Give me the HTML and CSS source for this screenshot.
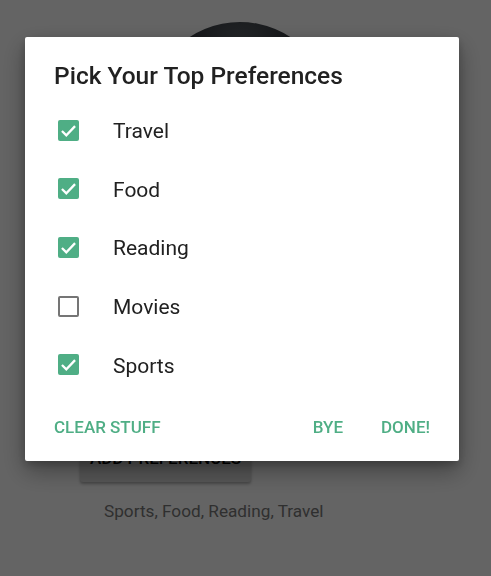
FILE: index.html
```html
<!DOCTYPE html>
<html>
<head>
<meta charset="utf-8">
<link rel="stylesheet" href="styles.css">
</head>
<body>
<main class="page">
  <div class="avatar"></div>
  <button class="add-btn">ADD PREFERENCES</button>
  <p class="summary">Sports, Food, Reading, Travel</p>
</main>
<div class="scrim"></div>
<section class="dialog">
  <h1 class="dialog-title">Pick Your Top Preferences</h1>
  <ul class="choices">
    <li class="choice"><span class="box checked"><svg viewBox="0 0 24 24"><path d="M4.5 12.5l5 5L19.5 7" /></svg></span><span class="label">Travel</span></li>
    <li class="choice"><span class="box checked"><svg viewBox="0 0 24 24"><path d="M4.5 12.5l5 5L19.5 7" /></svg></span><span class="label">Food</span></li>
    <li class="choice"><span class="box checked"><svg viewBox="0 0 24 24"><path d="M4.5 12.5l5 5L19.5 7" /></svg></span><span class="label">Reading</span></li>
    <li class="choice"><span class="box"></span><span class="label">Movies</span></li>
    <li class="choice"><span class="box checked"><svg viewBox="0 0 24 24"><path d="M4.5 12.5l5 5L19.5 7" /></svg></span><span class="label">Sports</span></li>
  </ul>
  <div class="actions">
    <button class="text-btn">CLEAR STUFF</button>
    <span class="spacer"></span>
    <button class="text-btn">BYE</button>
    <button class="text-btn">DONE!</button>
  </div>
</section>
</body>
</html>
```
FILE: styles.css
```css
html, body {
  margin: 0;
  padding: 0;
  height: 100%;
}
body {
  background: #fafafa;
  font-family: Roboto, "Noto Sans", sans-serif;
  overflow: hidden;
}
.page {
  display: flex;
  flex-direction: column;
  align-items: flex-start;
  padding-top: 22px;
}
.avatar {
  width: 184px;
  height: 184px;
  border-radius: 50%;
  margin-left: 148px;
  background: radial-gradient(circle at 50% 20%, #6a7078 0%, #2f3338 35%, #1e2023 70%);
}
.add-btn {
  margin-top: 228px;
  margin-left: 80px;
  width: 171px;
  height: 48px;
  border: none;
  border-radius: 3px;
  background: #d6d6d6;
  color: #000;
  font-family: Roboto, sans-serif;
  font-weight: 500;
  font-size: 17px;
  box-shadow: 0 2px 3px rgba(0,0,0,0.3);
}
.summary {
  margin: 19px 0 0 104px;
  font-size: 17.2px;
  color: #777;
}
.scrim {
  position: fixed;
  inset: 0;
  background: rgba(0,0,0,0.6);
}
.dialog {
  position: fixed;
  left: 25px;
  top: 37px;
  width: 434px;
  height: 424px;
  box-sizing: border-box;
  background: #fff;
  border-radius: 2px;
  box-shadow: 0 10px 24px rgba(0,0,0,0.35), 0 4px 8px rgba(0,0,0,0.2);
  padding: 25px 0 12px;
  display: flex;
  flex-direction: column;
}
.dialog-title {
  margin: 0 0 11px 29px;
  font-size: 24.5px;
  line-height: 28px;
  font-weight: 500;
  color: #212121;
}
.choices {
  list-style: none;
  margin: 0;
  padding: 0;
}
.choice {
  height: 58.6px;
  display: flex;
  align-items: center;
  padding-left: 33px;
}
.box {
  width: 21px;
  height: 21px;
  box-sizing: border-box;
  border: 2.5px solid #757575;
  border-radius: 2px;
  display: flex;
  align-items: center;
  justify-content: center;
}
.box.checked {
  border: none;
  background: #4fae85;
}
.box svg {
  width: 21px;
  height: 21px;
  fill: none;
  stroke: #fff;
  stroke-width: 2.6;
}
.label {
  margin-left: 34px;
  font-size: 21px;
  color: #212121;
  padding-top: 2px;
}
.actions {
  margin-top: auto;
  display: flex;
  align-items: center;
  height: 44px;
  padding: 0 29px;
  gap: 38px;
}
.spacer {
  flex: 1;
}
.actions .spacer + .text-btn {
  margin-left: -38px;
}
.text-btn {
  border: none;
  background: none;
  padding: 0;
  font-family: Roboto, sans-serif;
  font-weight: 500;
  font-size: 17px;
  color: #4fae85;
}
```
